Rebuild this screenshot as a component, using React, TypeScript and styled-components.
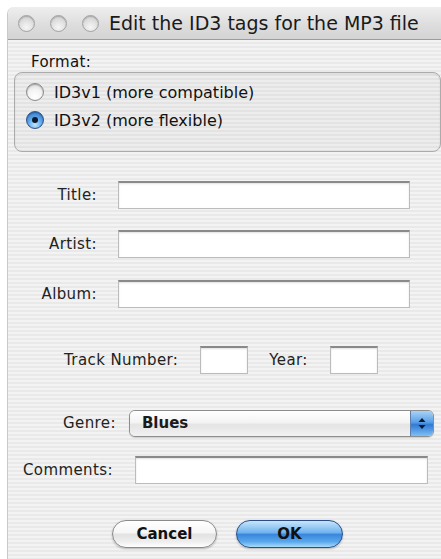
import styled, { createGlobalStyle } from 'styled-components';

const GlobalStyle = createGlobalStyle`
  html, body {
    margin: 0;
    padding: 0;
    background: #ffffff;
  }
  body {
    font-family: 'DejaVu Sans', 'Liberation Sans', sans-serif;
    color: #111;
  }
`;

const Window = styled.div`
  margin: 7px 0 0 7px;
  width: 434px;
  height: 552px;
  display: flex;
  flex-direction: column;
  border-left: 1px solid #c9c9c9;
  border-top-left-radius: 7px;
  overflow: hidden;
  box-sizing: border-box;
`;

const TitleBar = styled.div`
  height: 33px;
  flex-shrink: 0;
  display: flex;
  align-items: center;
  padding-left: 10px;
  gap: 15px;
  background: linear-gradient(#eeeeee, #dcdcdc 60%, #d4d4d4);
  border-bottom: 1px solid #9c9c9c;
  box-sizing: border-box;
`;

const Light = styled.span`
  width: 17px;
  height: 17px;
  border-radius: 50%;
  box-sizing: border-box;
  border: 1px solid #a2a2a2;
  background: radial-gradient(circle at 50% 75%, #f6f6f6 0%, #e2e2e2 45%, #c9c9c9 100%);
  box-shadow: inset 0 1px 1px rgba(0, 0, 0, 0.2);
`;

const Caption = styled.span`
  margin-left: -5px;
  font-size: 19px;
  color: #1a1a1a;
  white-space: nowrap;
`;

const Body = styled.div`
  flex: 1;
  display: flex;
  flex-direction: column;
  background: repeating-linear-gradient(
    to bottom,
    #f3f3f3 0px,
    #f3f3f3 2px,
    #e9e9e9 2px,
    #e9e9e9 4px
  );
`;

const SectionLabel = styled.div`
  margin: 13px 0 0 23px;
  height: 18px;
  line-height: 18px;
  font-size: 15px;
  letter-spacing: 0.3px;
`;

const GroupBox = styled.div`
  margin: 1px 0 0 6px;
  width: 427px;
  height: 80px;
  box-sizing: border-box;
  border: 1px solid #ababab;
  border-radius: 8px;
  background: rgba(0, 0, 0, 0.025);
  box-shadow: inset 0 1px 2px rgba(0, 0, 0, 0.08);
  padding: 10px 0 0 11px;
  display: flex;
  flex-direction: column;
  gap: 10px;
`;

const RadioRow = styled.label`
  display: flex;
  align-items: center;
  gap: 10px;
  height: 18px;
  font-size: 16px;
  white-space: nowrap;
`;

const RadioDot = styled.span<{ $on?: boolean }>`
  width: 18px;
  height: 18px;
  border-radius: 50%;
  box-sizing: border-box;
  display: flex;
  align-items: center;
  justify-content: center;
  border: 1px solid ${({ $on }) => ($on ? '#2d4f86' : '#8a8a8a')};
  background: ${({ $on }) =>
    $on
      ? 'radial-gradient(circle at 50% 80%, #bfe6ff 0%, #5ea8ec 45%, #2a6fc4 100%)'
      : 'radial-gradient(circle at 50% 80%, #ffffff 0%, #f3f3f3 50%, #cfcfcf 100%)'};
  box-shadow: inset 0 1px 1px rgba(0, 0, 0, 0.25);
  &::after {
    content: '';
    display: ${({ $on }) => ($on ? 'block' : 'none')};
    width: 6px;
    height: 6px;
    border-radius: 50%;
    background: #0d1a2c;
  }
`;

const Row = styled.div<{ $top: number; $indent: number; $gap: number }>`
  margin-top: ${({ $top }) => $top}px;
  padding-left: ${({ $indent }) => $indent}px;
  display: flex;
  align-items: center;
  gap: ${({ $gap }) => $gap}px;
  height: 28px;
`;

const Label = styled.span<{ $width?: number }>`
  width: ${({ $width }) => ($width ? `${$width}px` : 'auto')};
  text-align: right;
  font-size: 15px;
  letter-spacing: 0.4px;
  color: #222;
  white-space: nowrap;
`;

const TextField = styled.div<{ $width: number }>`
  width: ${({ $width }) => $width}px;
  height: 28px;
  box-sizing: border-box;
  background: #fff;
  border: 1px solid #bcbcbc;
  border-top: 2px solid #8a8a8a;
  box-shadow: inset 0 1px 2px rgba(0, 0, 0, 0.12);
`;

const Spacer = styled.span<{ $w: number }>`
  width: ${({ $w }) => $w}px;
`;

const Popup = styled.div`
  width: 305px;
  height: 27px;
  box-sizing: border-box;
  display: flex;
  border: 1px solid #8d8d8d;
  border-radius: 6px;
  overflow: hidden;
  box-shadow: 0 1px 1px rgba(0, 0, 0, 0.15);
`;

const PopupValue = styled.div`
  flex: 1;
  display: flex;
  align-items: center;
  padding-left: 12px;
  font-size: 15px;
  font-weight: bold;
  color: #1b1b1b;
  background: linear-gradient(#ffffff 0%, #f4f4f4 45%, #e4e4e4 55%, #f2f2f2 100%);
`;

const PopupCap = styled.div`
  width: 22px;
  display: flex;
  align-items: center;
  justify-content: center;
  border-left: 1px solid #5d7fae;
  background: linear-gradient(#a9d3f7 0%, #5a9fe6 45%, #2f7ad6 55%, #7fc0f5 100%);
`;

const ButtonBar = styled.div`
  margin-top: 36px;
  padding-left: 104px;
  display: flex;
  gap: 19px;
`;

const AquaButton = styled.button<{ $primary?: boolean; $width: number }>`
  width: ${({ $width }) => $width}px;
  height: 28px;
  border-radius: 14px;
  font-family: inherit;
  font-size: 15px;
  font-weight: bold;
  color: #111;
  padding: 0;
  border: 1px solid ${({ $primary }) => ($primary ? '#2b4c86' : '#8a8a8a')};
  background: ${({ $primary }) =>
    $primary
      ? 'linear-gradient(#c7e5fb 0%, #6fb2ee 45%, #3a86dc 52%, #5aa8ec 80%, #a9dcfb 100%)'
      : 'linear-gradient(#ffffff 0%, #f6f6f6 45%, #e2e2e2 52%, #efefef 80%, #ffffff 100%)'};
  box-shadow: 0 1px 2px rgba(0, 0, 0, 0.25);
`;

function UpDownArrows() {
  return (
    <svg width="8" height="13" viewBox="0 0 8 13">
      <path d="M4 1 L7.5 5 L0.5 5 Z" fill="#0c1a30" />
      <path d="M4 12 L7.5 8 L0.5 8 Z" fill="#0c1a30" />
    </svg>
  );
}

export default function App() {
  return (
    <>
      <GlobalStyle />
      <Window>
        <TitleBar>
          <Light />
          <Light />
          <Light />
          <Caption>Edit the ID3 tags for the MP3 file</Caption>
        </TitleBar>
        <Body>
          <SectionLabel>Format:</SectionLabel>
          <GroupBox>
            <RadioRow>
              <RadioDot />
              ID3v1 (more compatible)
            </RadioRow>
            <RadioRow>
              <RadioDot $on />
              ID3v2 (more flexible)
            </RadioRow>
          </GroupBox>

          <Row $top={29} $indent={0} $gap={21}>
            <Label $width={89}>Title:</Label>
            <TextField $width={292} />
          </Row>
          <Row $top={21} $indent={0} $gap={21}>
            <Label $width={89}>Artist:</Label>
            <TextField $width={292} />
          </Row>
          <Row $top={22} $indent={0} $gap={21}>
            <Label $width={89}>Album:</Label>
            <TextField $width={292} />
          </Row>

          <Row $top={38} $indent={56} $gap={0}>
            <Label>Track Number:</Label>
            <Spacer $w={22} />
            <TextField $width={48} />
            <Spacer $w={21} />
            <Label>Year:</Label>
            <Spacer $w={22} />
            <TextField $width={48} />
          </Row>

          <Row $top={35} $indent={55} $gap={13}>
            <Label>Genre:</Label>
            <Popup>
              <PopupValue>Blues</PopupValue>
              <PopupCap>
                <UpDownArrows />
              </PopupCap>
            </Popup>
          </Row>

          <Row $top={19} $indent={15} $gap={22}>
            <Label>Comments:</Label>
            <TextField $width={293} />
          </Row>

          <ButtonBar>
            <AquaButton $width={105}>Cancel</AquaButton>
            <AquaButton $width={107} $primary>
              OK
            </AquaButton>
          </ButtonBar>
        </Body>
      </Window>
    </>
  );
}
